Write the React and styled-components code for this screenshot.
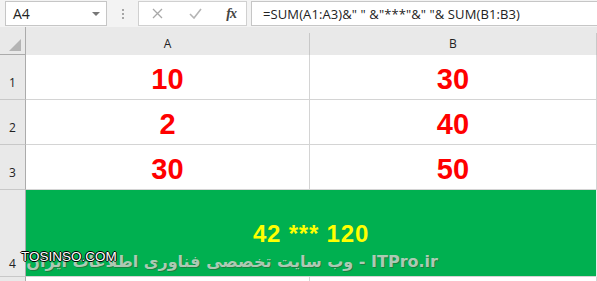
import React from 'react'
import styled, { createGlobalStyle } from 'styled-components'

const GlobalStyle = createGlobalStyle`
  html, body {
    margin: 0;
    padding: 0;
    background: #f3f3f3;
  }
  * {
    box-sizing: border-box;
  }
`

const Page = styled.div`
  position: relative;
  width: 597px;
  height: 281px;
  overflow: hidden;
  background: #e9e9e9;
  font-family: "Open Sans", "Liberation Sans", sans-serif;
`

const FormulaBar = styled.div`
  display: flex;
  align-items: stretch;
  height: 27px;
  padding: 1px 0 1px 5px;
  background: #f3f3f3;
`

const NameBox = styled.div`
  display: flex;
  align-items: center;
  justify-content: space-between;
  width: 102px;
  padding: 0 6px 0 7px;
  background: #fff;
  border: 1px solid #c6c6c6;
  font-size: 14px;
  color: #222;
`

const DropArrow = styled.span`
  width: 0;
  height: 0;
  border-left: 4px solid transparent;
  border-right: 4px solid transparent;
  border-top: 4px solid #777;
`

const Grip = styled.div`
  display: flex;
  flex-direction: column;
  justify-content: center;
  gap: 2px;
  width: 31px;
  padding-left: 15px;

  span {
    width: 2px;
    height: 2px;
    background: #a6a6a6;
  }
`

const ButtonsBox = styled.div`
  display: flex;
  align-items: center;
  justify-content: space-between;
  width: 109px;
  padding: 0 6px 0 11px;
  background: #fff;
  border: 1px solid #d0d0d0;
`

const IconSlot = styled.span`
  display: flex;
  align-items: center;
  justify-content: center;
  width: 14px;
`

const Fx = styled.span`
  font-family: "Liberation Serif", serif;
  font-style: italic;
  font-weight: bold;
  font-size: 14px;
  color: #444;
  letter-spacing: -1px;
  margin-right: 4px;
`

const FormulaInput = styled.div`
  flex: 1;
  display: flex;
  align-items: center;
  margin-left: 4px;
  padding-left: 11px;
  background: #fff;
  border: 1px solid #c6c6c6;
  border-right: none;
  font-size: 13px;
  letter-spacing: 0.1px;
  color: #222;
  white-space: pre;
`

const Sheet = styled.div`
  display: grid;
  grid-template-columns: 26px 284px 287px;
  grid-template-rows: 28px 45px 45px 45px 87px 10px;
`

const Corner = styled.div`
  display: flex;
  align-items: flex-end;
  justify-content: flex-end;
  padding: 0 4px 3px 0;
  border-right: 1px solid #ababab;
  border-bottom: 1px solid #ababab;
`

const Triangle = styled.div`
  width: 0;
  height: 0;
  border-left: 12px solid transparent;
  border-bottom: 12px solid #b4b4b4;
`

const ColHead = styled.div`
  display: flex;
  align-items: center;
  justify-content: center;
  padding-top: 6px;
  border-bottom: 1px solid #ababab;
  font-size: 12px;
  color: #222;
  border-right: 1px solid #c8c8c8;
  border-image: linear-gradient(transparent 0 7px, #c8c8c8 7px) 1;
  border-image-width: 0 1px 0 0;
`

const RowHead = styled.div`
  display: flex;
  align-items: flex-end;
  justify-content: center;
  padding-bottom: ${p => p.$pb || 8}px;
  border-right: 1px solid #ababab;
  border-bottom: 1px solid #c8c8c8;
  font-size: 12px;
  color: #222;
`

const Cell = styled.div`
  display: flex;
  align-items: flex-end;
  justify-content: center;
  padding-bottom: 5px;
  background: #fff;
  border-right: 1px solid #d4d4d4;
  border-bottom: 1px solid #d4d4d4;
  font-family: "Liberation Sans", Arial, sans-serif;
  font-weight: bold;
  font-size: 29px;
  line-height: 1;
  color: #ff0000;
`

const MergedCell = styled.div`
  grid-column: 2 / 4;
  display: flex;
  justify-content: center;
  align-items: flex-start;
  padding-top: 32px;
  margin-right: 1px;
  background: #00b050;
  border-bottom: 1px solid #d4d4d4;
  font-family: "Liberation Sans", Arial, sans-serif;
  font-weight: bold;
  font-size: 24px;
  letter-spacing: 0.8px;
  line-height: 1;
  color: #ffff00;
`

const BlankCell = styled.div`
  background: #fff;
  border-right: 1px solid #d4d4d4;
`

const Watermark = styled.div`
  position: absolute;
  left: 88px;
  top: 252px;
  width: 350px;
  direction: rtl;
  white-space: nowrap;
  font-family: "DejaVu Sans", sans-serif;
  font-weight: bold;
  font-size: 16px;
  color: rgba(196, 210, 196, 0.9);
  text-shadow: 1px 1px 0 rgba(50, 80, 50, 0.5);
`

const SiteTag = styled.div`
  position: absolute;
  left: 21px;
  top: 249px;
  font-family: "Liberation Sans", Arial, sans-serif;
  font-size: 13.5px;
  color: #fff;
  text-shadow: -1px 0 0 #000, 1px 0 0 #000, 0 -1px 0 #000, 0 1px 0 #000;
`

const rows = [
  ['1', '10', '30'],
  ['2', '2', '40'],
  ['3', '30', '50']
]

const CrossIcon = () => (
  <svg width="11" height="11" viewBox="0 0 11 11">
    <path d="M1 1 L10 10 M10 1 L1 10" stroke="#a8a8a8" strokeWidth="1.3" fill="none" />
  </svg>
)

const CheckIcon = () => (
  <svg width="13" height="11" viewBox="0 0 13 11">
    <path d="M1 6 L5 10 L12 1" stroke="#b4b4b4" strokeWidth="1.6" fill="none" />
  </svg>
)

const App = () => (
  <Page>
    <GlobalStyle />
    <FormulaBar>
      <NameBox>
        A4
        <DropArrow />
      </NameBox>
      <Grip>
        <span />
        <span />
        <span />
      </Grip>
      <ButtonsBox>
        <IconSlot><CrossIcon /></IconSlot>
        <IconSlot><CheckIcon /></IconSlot>
        <Fx>fx</Fx>
      </ButtonsBox>
      <FormulaInput>{'=SUM(A1:A3)&" " &"***"&" "& SUM(B1:B3)'}</FormulaInput>
    </FormulaBar>
    <Sheet>
      <Corner><Triangle /></Corner>
      <ColHead>A</ColHead>
      <ColHead>B</ColHead>
      {rows.map(([n, a, b]) => (
        <React.Fragment key={n}>
          <RowHead>{n}</RowHead>
          <Cell>{a}</Cell>
          <Cell>{b}</Cell>
        </React.Fragment>
      ))}
      <RowHead $pb={4}>4</RowHead>
      <MergedCell>42 *** 120</MergedCell>
      <RowHead />
      <BlankCell />
      <BlankCell />
    </Sheet>
    <Watermark>ITPro.ir - وب سایت تخصصی فناوری اطلاعات ایران</Watermark>
    <SiteTag>TOSINSO.COM</SiteTag>
  </Page>
)

export default App
